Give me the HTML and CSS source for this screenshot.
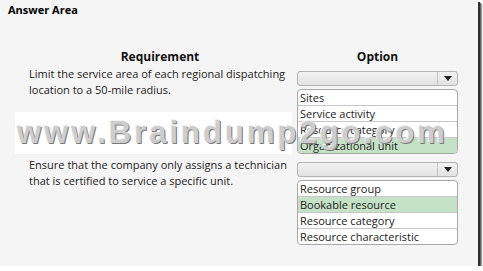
FILE: index.html
```html
<!DOCTYPE html>
<html lang="en">
<head>
    <meta charset="UTF-8">
    <title>Answer Area</title>
    <link rel="stylesheet" href="styles.css">
</head>
<body>
    <div class="panel">
        <h1 class="title">Answer Area</h1>
        <div class="table">
            <div class="head">Requirement</div>
            <div class="head">Option</div>

            <div class="req">Limit the service area of each regional dispatching location to a 50-mile radius.</div>
            <div class="opt">
                <div class="select"><span class="arrow"></span></div>
                <ul class="list">
                    <li>Sites</li>
                    <li>Service activity</li>
                    <li>Resource category</li>
                    <li class="picked">Organizational unit</li>
                </ul>
            </div>

            <div class="req">Ensure that the company only assigns a technician that is certified to service a specific unit.</div>
            <div class="opt">
                <div class="select"><span class="arrow"></span></div>
                <ul class="list">
                    <li>Resource group</li>
                    <li class="picked">Bookable resource</li>
                    <li>Resource category</li>
                    <li>Resource characteristic</li>
                </ul>
            </div>
        </div>
        <div class="watermark">www.Braindump2go.com</div>
    </div>
</body>
</html>
```

FILE: styles.css
```css
body {
    margin: 0;
    background: #fff;
    font-family: "Open Sans", "Noto Sans", sans-serif;
    color: #222;
}

.panel {
    position: relative;
    width: 478px;
    height: 266px;
    background: #f5f5f5;
    box-shadow: 2px 2px 0 #2e2e2e, 3px 3px 1px #666, 4px 4px 1px #aaa;
}

.title {
    margin: 0;
    padding: 3px 0 0 8px;
    font-size: 11px;
    font-weight: bold;
    line-height: 13px;
    color: #000;
}

.table {
    display: grid;
    grid-template-columns: 262px 161px;
    column-gap: 6px;
    padding: 33px 0 0 29px;
}

.head {
    text-align: center;
    font-size: 12px;
    font-weight: bold;
    line-height: 16px;
    color: #111;
}

.req {
    font-size: 11px;
    line-height: 16px;
    padding-top: 1px;
}

.opt {
    padding-top: 6px;
    margin-bottom: 2px;
}

.select {
    display: flex;
    justify-content: flex-end;
    height: 13px;
    border: 1px solid #b4b4b4;
    border-radius: 3px;
    background: linear-gradient(#f2f2f2, #e2e2e2);
}

.arrow {
    width: 19px;
    border-left: 1px solid #c4c4c4;
    display: flex;
    align-items: center;
    justify-content: center;
}

.arrow::after {
    content: "";
    border-left: 4px solid transparent;
    border-right: 4px solid transparent;
    border-top: 5px solid #222;
}

.list {
    list-style: none;
    margin: 3px 0 0;
    padding: 0;
    border: 1px solid #a8a8a8;
    border-radius: 4px;
    background: #fff;
    overflow: hidden;
}

.list li {
    font-size: 11px;
    line-height: 15px;
    padding-left: 2px;
    border-top: 1px solid #c8c8c8;
}

.list li:first-child {
    border-top: none;
}

.list .picked {
    background: #c6e2c6;
}

.watermark {
    position: absolute;
    left: 15px;
    top: 112px;
    width: 275px;
    height: 42px;
    padding-left: 2px;
    background: #fff;
    font-family: "Liberation Sans", Arial, sans-serif;
    font-size: 31px;
    font-weight: bold;
    letter-spacing: 3px;
    line-height: 42px;
    white-space: nowrap;
    color: #cdcdcd;
    text-shadow: 1px 1px 0 #7a7a7a, -1px -1px 0 #f2f2f2;
}
```
